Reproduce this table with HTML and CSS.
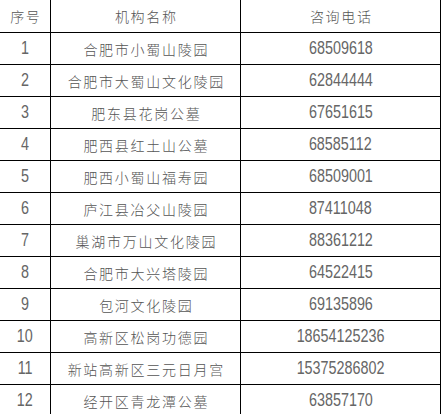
FILE: index.html
```html
<!DOCTYPE html>
<html lang="zh-CN">
<head>
<meta charset="utf-8">
<title>陵园列表</title>
<link rel="stylesheet" href="styles.css">
</head>
<body>
<div class="grid">
  <div class="cell head">序号</div><div class="cell head">机构名称</div><div class="cell head">咨询电话</div>
  <div class="cell"><span class="num">1</span></div><div class="cell name">合肥市小蜀山陵园</div><div class="cell"><span class="num">68509618</span></div>
  <div class="cell"><span class="num">2</span></div><div class="cell name">合肥市大蜀山文化陵园</div><div class="cell"><span class="num">62844444</span></div>
  <div class="cell"><span class="num">3</span></div><div class="cell name">肥东县花岗公墓</div><div class="cell"><span class="num">67651615</span></div>
  <div class="cell"><span class="num">4</span></div><div class="cell name">肥西县红土山公墓</div><div class="cell"><span class="num">68585112</span></div>
  <div class="cell"><span class="num">5</span></div><div class="cell name">肥西小蜀山福寿园</div><div class="cell"><span class="num">68509001</span></div>
  <div class="cell"><span class="num">6</span></div><div class="cell name">庐江县冶父山陵园</div><div class="cell"><span class="num">87411048</span></div>
  <div class="cell"><span class="num">7</span></div><div class="cell name">巢湖市万山文化陵园</div><div class="cell"><span class="num">88361212</span></div>
  <div class="cell"><span class="num">8</span></div><div class="cell name">合肥市大兴塔陵园</div><div class="cell"><span class="num">64522415</span></div>
  <div class="cell"><span class="num">9</span></div><div class="cell name">包河文化陵园</div><div class="cell"><span class="num">69135896</span></div>
  <div class="cell"><span class="num">10</span></div><div class="cell name">高新区松岗功德园</div><div class="cell"><span class="num">18654125236</span></div>
  <div class="cell"><span class="num">11</span></div><div class="cell name">新站高新区三元日月宫</div><div class="cell"><span class="num">15375286802</span></div>
  <div class="cell"><span class="num">12</span></div><div class="cell name">经开区青龙潭公墓</div><div class="cell"><span class="num">63857170</span></div>
</div>
</body>
</html>
```
FILE: styles.css
```css
html, body {
  margin: 0;
  padding: 0;
  background: #fff;
  overflow: hidden;
}
.grid {
  display: grid;
  grid-template-columns: 50px 189px 199px;
  grid-template-rows: 32px repeat(12, 31px);
  gap: 1px;
  padding: 0 1px 1px 0;
  background: #000;
  width: max-content;
}
.cell {
  background: #fff;
  display: flex;
  align-items: center;
  justify-content: center;
  color: #555;
  white-space: nowrap;
  overflow: hidden;
}
.head, .name {
  font-family: "Noto Sans CJK SC", sans-serif;
  font-weight: 300;
  font-size: 14px;
  letter-spacing: 1.75px;
  padding-left: 1.75px;
}
.num {
  display: inline-block;
  font-family: "Liberation Sans", Arial, sans-serif;
  font-size: 17.5px;
  color: #666;
  transform: scaleX(0.82);
}
```
